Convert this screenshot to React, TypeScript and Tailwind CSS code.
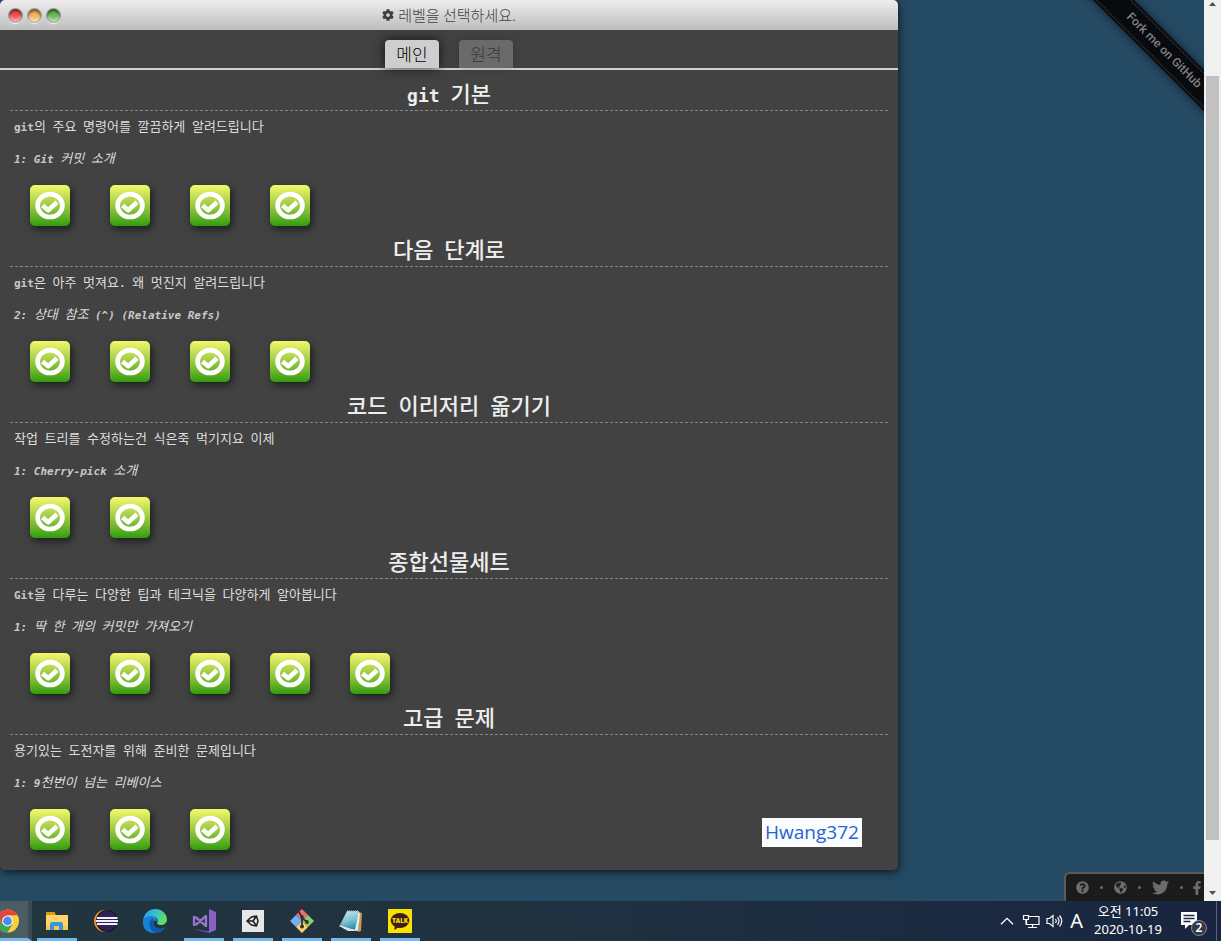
import { Fragment, type ReactNode } from "react";
import { FaCog, FaFacebookF, FaGlobeAmericas, FaQuestionCircle, FaTwitter } from "react-icons/fa";

type Series = { title: string; about: string; current: string; levels: number };

const seriesList: Series[] = [
  { title: "git 기본", about: "git의 주요 명령어를 깔끔하게 알려드립니다", current: "1: Git 커밋 소개", levels: 4 },
  { title: "다음 단계로", about: "git은 아주 멋져요. 왜 멋진지 알려드립니다", current: "2: 상대 참조 (^) (Relative Refs)", levels: 4 },
  { title: "코드 이리저리 옮기기", about: "작업 트리를 수정하는건 식은죽 먹기지요 이제", current: "1: Cherry-pick 소개", levels: 2 },
  { title: "종합선물세트", about: "Git을 다루는 다양한 팁과 테크닉을 다양하게 알아봅니다", current: "1: 딱 한 개의 커밋만 가져오기", levels: 5 },
  { title: "고급 문제", about: "용기있는 도전자를 위해 준비한 문제입니다", current: "1: 9천번이 넘는 리베이스", levels: 3 },
];

/* Hangul runs are set in their own face and size beside the monospace Latin. */
function Mixed({ text, hangul }: { text: string; hangul: string }) {
  return (
    <>
      {text.split(/([가-힣]+)/).map((part, i) =>
        /[가-힣]/.test(part) ? (
          <span key={i} className={hangul}>{part}</span>
        ) : (
          <Fragment key={i}>{part}</Fragment>
        ),
      )}
    </>
  );
}

function LevelButton({ label }: { label: string }) {
  return (
    <button
      type="button"
      aria-label={label}
      className="h-[41px] w-10 rounded-[5px] bg-linear-to-b from-[#f5f86d] to-[#2b9d0c] shadow-[2px_3px_8px_rgba(0,0,0,0.6)]"
    >
      <svg viewBox="0 0 40 41" className="h-[41px] w-10" fill="none" stroke="#fff">
        <ellipse cx="20" cy="20.6" rx="12.4" ry="11.4" strokeWidth="4.7" />
        <path d="M12.6 20.4 L18.2 25.2 L27 17.2" strokeWidth="4.6" strokeLinejoin="round" />
      </svg>
    </button>
  );
}

function SeriesBlock({ series }: { series: Series }) {
  return (
    <section className="pb-2.5">
      <h2 className="flex h-[31px] items-center justify-center border-b border-dashed border-[#868686] pb-1 font-['DejaVu_Sans_Mono','Noto_Sans_CJK_KR',monospace] text-lg leading-none font-bold text-[#eee]">
        <span className="whitespace-pre">
          <Mixed text={series.title} hangul="font-['Noto_Sans_CJK_KR',sans-serif] text-[22px] leading-none font-medium" />
        </span>
      </h2>
      <p className="h-8 px-1 pt-px text-[11px] leading-8 font-bold text-[#c8c8c8]">
        <Mixed text={series.about} hangul="font-['Noto_Sans_CJK_KR',sans-serif] text-[13px] leading-none font-normal text-[#dedede]" />
      </p>
      <p className="h-8 px-1 pt-px text-[11px] leading-8 font-bold text-[#c8c8c8] italic">
        <Mixed text={series.current} hangul="font-['Noto_Sans_CJK_KR',sans-serif] text-[13px] leading-none font-normal text-[#dedede]" />
      </p>
      <div className="mt-2.5 flex gap-10 px-5">
        {Array.from({ length: series.levels }, (_, i) => (
          <LevelButton key={i} label={`${series.title} ${i + 1}`} />
        ))}
      </div>
    </section>
  );
}

function WindowLight({ label, color }: { label: string; color: string }) {
  return (
    <button
      type="button"
      aria-label={label}
      className={`size-[13px] rounded-full shadow-[inset_0_2px_3px_rgba(0,0,0,0.6),inset_0_-3px_3px_rgba(255,255,255,0.55),0_0_0_1px_rgba(90,90,90,0.5),0_2px_1px_rgba(255,255,255,0.9)] ${color}`}
    />
  );
}

function LevelWindow() {
  return (
    <main className="relative overflow-visible rounded-[5px] bg-[#424242] shadow-[1px_2px_8px_rgba(0,0,0,0.65)]">
      <header className="relative flex h-[30px] items-center justify-center rounded-t-[5px] bg-linear-to-b from-[#efedee] to-[#bebebe] text-[#404040]">
        <div className="absolute inset-y-0 left-[9px] flex items-center gap-1.5">
          <WindowLight label="닫기" color="bg-[#f45050]" />
          <WindowLight label="최소화" color="bg-[#f3b55c]" />
          <WindowLight label="최대화" color="bg-[#6bb957]" />
        </div>
        <h1 className="flex items-center gap-1 pb-0.5 font-['Noto_Sans_CJK_KR',sans-serif] text-[15px] leading-none font-light">
          <FaCog className="mt-0.5 size-3" />
          레벨을 선택하세요.
        </h1>
      </header>
      <nav className="flex h-10 items-end justify-center gap-5 border-b-2 border-[#d0d0d0] font-['Noto_Sans_CJK_KR',sans-serif] text-[17px] leading-7 font-light">
        <button type="button" className="h-7 w-[54px] rounded-t-[4px] bg-[#cecece] text-black shadow-[0_0_12px_rgba(0,0,0,0.75)]">
          메인
        </button>
        <button type="button" className="h-7 w-[54px] rounded-t-[4px] bg-[#6a6a6a] text-[#383838] shadow-[0_0_8px_rgba(0,0,0,0.2)]">
          원격
        </button>
      </nav>
      <div className="p-2.5 font-['DejaVu_Sans_Mono','Noto_Sans_CJK_KR',monospace]">
        {seriesList.map((s) => (
          <SeriesBlock key={s.title} series={s} />
        ))}
      </div>
      <p className="absolute right-9 bottom-[23px] h-[29px] w-[100px] bg-[#fbfcfe] text-center font-['Open_Sans',sans-serif] text-[19px] leading-[29px] text-[#2265d4]">
        Hwang372
      </p>
    </main>
  );
}

function Dot() {
  return <span className="size-[3px] rounded-full bg-[#6c6c6c]" />;
}

function SocialBar() {
  return (
    <div className="absolute right-0 bottom-0 h-[29px] w-[140px] overflow-hidden rounded-tl-md border-t-2 border-l-2 border-[#5a5a5a] bg-[#1b1b1b] text-[#6c6c6c]">
      <div className="flex h-[27px] w-[150px] items-center gap-[11px] pl-2.5">
        <a href="#help" aria-label="도움말"><FaQuestionCircle className="size-[13px]" /></a>
        <Dot />
        <a href="#language" aria-label="언어"><FaGlobeAmericas className="size-[13px]" /></a>
        <Dot />
        <a href="#twitter" aria-label="Twitter"><FaTwitter className="size-[17px]" /></a>
        <Dot />
        <a href="#facebook" aria-label="Facebook" className="-ml-1"><FaFacebookF className="size-[14px]" /></a>
      </div>
    </div>
  );
}

function Ribbon() {
  return (
    <div className="absolute top-0 right-0 size-[150px] overflow-hidden">
      <a
        href="#github"
        className="absolute top-[36px] -right-[60px] block h-[29px] w-[200px] rotate-45 bg-[#090a0e] py-0.5 text-center font-[Roboto,sans-serif] text-xs leading-[23px] font-medium text-[#808080] shadow-[0_0_8px_rgba(0,0,0,0.6)]"
      >
        <span className="block border-y border-dotted border-[#4b4b4b]">Fork me on GitHub</span>
      </a>
    </div>
  );
}

function ScrollBar() {
  return (
    <div className="flex w-[17px] flex-col items-center bg-[#f1f1f1] pt-0.5 pb-1.5">
      <svg viewBox="0 0 7 4" className="h-1 w-[7px]" fill="#505050"><path d="M0 4 3.5 0 7 4z" /></svg>
      <div className="grow-[70]" />
      <div className="w-[13px] grow-[763] bg-[#c1c1c1]" />
      <div className="grow-[51]" />
      <svg viewBox="0 0 7 4" className="h-1 w-[7px]" fill="#505050"><path d="M0 0 3.5 4 7 0z" /></svg>
    </div>
  );
}

const icons: { name: string; running: boolean; art: ReactNode }[] = [
  {
    name: "파일 탐색기",
    running: true,
    art: (
      <>
        <path d="M1 4h8l2 2h12v15H1z" fill="#fdd468" />
        <path d="M1 3h9v3H1z" fill="#d99a10" />
        <path d="M1 17h22v4H1z" fill="#f7c64f" />
        <path d="M5 21v-6q0-2 2-2h9q2 0 2 2v6h-4v-4H9v4z" fill="#3a96dc" />
      </>
    ),
  },
  {
    name: "Eclipse",
    running: false,
    art: (
      <>
        <circle cx="11" cy="12" r="11" fill="#f3912c" />
        <circle cx="13" cy="12" r="11" fill="#17142c" />
        <circle cx="13" cy="12" r="10" fill="#2d2456" />
        <path d="M3 9h20.500M2 12h22M3 15h20.500" stroke="#f3f1fb" strokeWidth="1.900" />
      </>
    ),
  },
  {
    name: "Microsoft Edge",
    running: false,
    art: (
      <>
        <defs>
          <linearGradient id="edgeTop" x1="0" y1="0" x2="1" y2="0.4">
            <stop offset="0" stopColor="#2496dc" />
            <stop offset="0.5" stopColor="#33bdd5" />
            <stop offset="1" stopColor="#63dd66" />
          </linearGradient>
        </defs>
        <path d="M0 12C1 4 6 0 12 0c7 0 12 5 12 10.500 0 3.500-3 5.500-6 5.500-3 0-4.500-1-3.500-3 .8-2 0-5-4-5C5 8 1 11 0 15z" fill="url(#edgeTop)" />
        <path d="M0 12C1 8 5 6.500 9 7c4 .5 6 3 5 5.500-4-2-6 1-5 4 1.500 4 5 6 9 5.500-3 2-10 3-14 0-3-2-4.500-6-4-10z" fill="#1681d8" />
        <path d="M9 9.500c-4 3-4 10 3 14.500 5 0 8-2 10.500-6-3 2-8 2-10.500-.5-1.600-1.600-1.500-3.500-.5-5.500z" fill="#1259a6" />
      </>
    ),
  },
  {
    name: "Visual Studio",
    running: true,
    art: (
      <>
        <path d="M17 0l7 3v18l-7 3z" fill="#8a60c6" />
        <path d="M2 8v8l2-.5L14 7v10L4 8.500z" fill="none" stroke="#9b74d0" strokeWidth="2.300" strokeLinejoin="round" />
        <path d="M0 20l17 2v2z" fill="#6e46ad" />
      </>
    ),
  },
  {
    name: "Unity",
    running: true,
    art: (
      <>
        <rect x="1" y="1" width="22" height="22" fill="#e7e7e7" />
        <path d="M6 12l4.500-4 5-1 1.500 5-1.500 5-5-1zM6 12h6M12 12l3.500-5M12 12l3.500 5" stroke="#1e1e1e" strokeWidth="1.500" fill="none" />
      </>
    ),
  },
  {
    name: "Git Bash",
    running: true,
    art: (
      <>
        <path d="M12 0l6 6-6 6-6-6z" fill="#f16c6c" />
        <path d="M6 6l6 6-6 6-6-6z" fill="#71b0fb" />
        <path d="M18 6l6 6-6 6-6-6z" fill="#8fd065" />
        <path d="M12 12l6 6-6 6-6-6z" fill="#fbd269" />
        <path d="M9 3l3 5v10M12 9l5 4" stroke="#29323a" strokeWidth="1.700" fill="none" />
        <g fill="#29323a"><circle cx="12" cy="8" r="1.800" /><circle cx="12" cy="17.500" r="2" /><circle cx="17" cy="13" r="1.900" /></g>
      </>
    ),
  },
  {
    name: "메모장",
    running: true,
    art: (
      <>
        <defs>
          <linearGradient id="notePage" x1="0" y1="0" x2="0.3" y2="1">
            <stop offset="0" stopColor="#cfeaf2" />
            <stop offset="0.6" stopColor="#7fc2d4" />
            <stop offset="1" stopColor="#2b93ad" />
          </linearGradient>
        </defs>
        <path d="M20 3l3 1-1 18-3 1z" fill="#c99b4d" />
        <path d="M18 3l3 1-2 18-6-1z" fill="#e9eef0" />
        <path d="M8 2h12l-4 19-15-5z" fill="url(#notePage)" />
        <path d="M1 16l15 5 2 1H9L0 17z" fill="#d9e2e4" />
        <path d="M8 2h12" stroke="#9db2b8" strokeWidth="1.500" strokeDasharray="1 1" />
      </>
    ),
  },
  {
    name: "KakaoTalk",
    running: true,
    art: (
      <>
        <path d="M0 0h24v24H0z" fill="#fae100" />
        <ellipse cx="12" cy="11.500" rx="9.300" ry="7.600" fill="#3c1e1e" />
        <path d="M7 16l-.8 5 5-3z" fill="#3c1e1e" />
        <text x="12" y="13.800" textAnchor="middle" fontFamily="Open Sans" fontSize="6" fontWeight="800" fill="#fae100">TALK</text>
      </>
    ),
  },
];

function TaskBar() {
  return (
    <footer className="flex h-10 items-stretch bg-linear-to-r from-[#22363e] via-[#1f3040] to-[#192540] text-white">
      <button type="button" aria-label="Chrome" className="mr-[5px] flex w-8 items-center border-r-4 border-b-3 border-r-[#3c4a54] border-b-[#76b9ed] bg-[#4b5c63]">
        <svg viewBox="4 0 20 24" className="mt-[3px] h-6 w-5">
          <circle cx="11.500" cy="12" r="11.500" fill="#fccd3f" />
          <path d="M1.500 6.250A11.500 11.500 0 0 1 21.500 6.250H11.500L6.500 15z" fill="#e2453b" />
          <path d="M1.500 6.250 6.500 15 16.500 15 11.500 23.500A11.500 11.500 0 0 1 1.500 6.250z" fill="#3aa757" />
          <circle cx="11.500" cy="12" r="5.400" fill="#fff" />
          <circle cx="11.500" cy="12" r="4.400" fill="#4a8af4" />
        </svg>
      </button>
      <div className="flex gap-[9px]">
        {icons.map((icon) => (
          <button
            key={icon.name}
            type="button"
            aria-label={icon.name}
            className={`flex w-10 items-center justify-center border-b-3 pt-[3px] ${icon.running ? "border-[#76b9ed]" : "border-transparent"}`}
          >
            <svg viewBox="0 0 24 24" className="size-6">{icon.art}</svg>
          </button>
        ))}
      </div>
      <div className="ml-auto flex items-center font-['Noto_Sans','Noto_Sans_CJK_KR',sans-serif]">
        <svg viewBox="0 0 14 8" className="mr-2 h-2 w-3.5" fill="none" stroke="#fff" strokeWidth="1.300"><path d="M1 7.300 7 1.300l6 6" /></svg>
        <svg viewBox="0 0 18 16" className="mr-1.5 h-4 w-[18px]" fill="none" stroke="#fff" strokeWidth="1.200">
          <path d="M6 3.500h11v8H4.500V7M1.500 2.500h5v4h-5zM4 6.500v5M10.500 11.500v3M6 14.500h9" />
        </svg>
        <svg viewBox="0 0 18 16" className="mr-1.5 h-4 w-[18px]" fill="none" stroke="#fff" strokeWidth="1.200">
          <path d="M1 5.500h2.500L7 2.500v11l-3.500-3H1zM9.500 6q1.500 2 0 4M11.500 4q3 4 0 8M13.500 2.500q4.500 5.500 0 11" />
        </svg>
        <span className="mr-[11px] text-xl leading-none">A</span>
        <time className="mr-[18px] w-[68px] pb-0.5 text-center text-[13px] leading-[18px]">
          <span className="block">오전 11:05</span>
          <span className="block">2020-10-19</span>
        </time>
        <button type="button" aria-label="알림 2개" className="relative mr-2.5 size-[26px]">
          <svg viewBox="0 0 26 26" className="size-[26px]">
            <path d="M1 4h16v13H9l-4 4v-4H1z" fill="#fff" />
            <path d="M3.500 7.500h11M3.500 10.500h11M3.500 13.500h7" stroke="#1a2742" strokeWidth="1.300" />
          </svg>
          <span className="absolute -right-px -bottom-0.5 flex size-4 items-center justify-center rounded-full border border-[#858b97] bg-[#313846] text-xs leading-none font-semibold">2</span>
        </button>
        <span className="mr-1 h-10 w-px bg-[#59637a]" />
      </div>
    </footer>
  );
}

export default function App() {
  return (
    <div className="flex min-h-screen flex-col">
      <div className="flex grow">
        <div className="relative grow overflow-hidden bg-[#254a63]">
          <div className="w-3/4 pr-[5px] pb-[31px]">
            <LevelWindow />
          </div>
          <Ribbon />
          <SocialBar />
        </div>
        <ScrollBar />
      </div>
      <TaskBar />
    </div>
  );
}
